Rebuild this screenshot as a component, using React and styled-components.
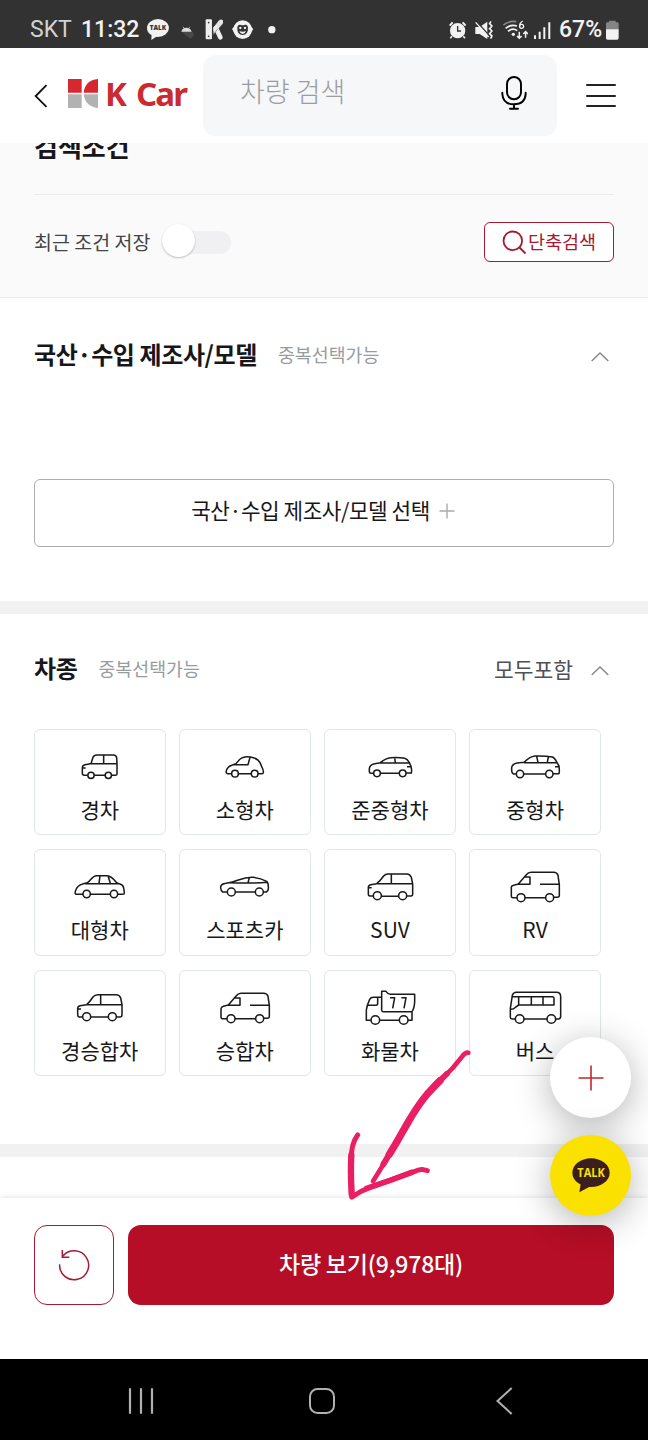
import styled, { createGlobalStyle } from "styled-components";

const carTypes = [
  {
    name: "경차",
    viewBox: "150 86 180 120",
    wheels: [[213, 165, 9.5], [265, 165, 9.5]],
    d: "M203 165H193Q187 165 187 159V142Q187 135 195 133L211 130H291M213 130L219 111Q222 104 230 104H280Q289 104 290 113L291 130V160Q291 165 286 165H275M255 165H223M251 104V130M188 143H197",
  },
  {
    name: "소형차",
    viewBox: "585 86 180 120",
    wheels: [[645, 160, 10], [704, 160, 10]],
    d: "M635 160H623Q617 159 619 151Q622 139 637 134L648 130Q656 117 667 112Q682 107 700 112Q719 117 725 139Q731 149 730 157Q729 160 724 160H714M655 160H694M638 133H684L690 111",
  },
  {
    name: "준중형차",
    viewBox: "134 86 180 120",
    wheels: [[185, 159, 10], [262, 159, 10]],
    d: "M175 159H167Q162 159 162 153V145Q163 133 178 130L195 127Q212 113 226 112Q250 110 268 114Q276 116 282 127L287 138Q290 150 288 158H272M195 159H252M195 128H282M238 112L240 127M275 139H288",
  },
  {
    name: "중형차",
    viewBox: "570 86 180 120",
    wheels: [[615, 161, 11], [703, 161, 11]],
    d: "M604 161H596Q590 159 590 150V141Q592 131 606 128L627 126Q644 109 660 107Q690 106 712 110Q719 112 725 125L732 137Q734 152 732 160H714M626 161H692M627 127H726M665 108L669 126M700 110L697 126M720 139H733",
  },
  {
    name: "대형차",
    viewBox: "150 448 180 120",
    wheels: [[200, 523, 11], [282, 523, 11]],
    d: "M189 524H169Q164 523 166 515Q170 497 190 492Q204 491 210 482Q221 468 230 468H262Q274 469 288 487Q291 491 300 493Q310 496 311 505L313 519Q313 524 309 524H293M211 524H271M195 492H297M240 468L237 491M264 468L271 491",
  },
  {
    name: "스포츠카",
    viewBox: "585 448 180 120",
    wheels: [[634, 517, 12], [718, 517, 12]],
    d: "M622 517H608Q603 514 602 505Q601 493 618 491Q638 488 655 481Q680 472 700 473Q722 475 740 485Q746 490 745 508Q744 514 739 517H730M646 517H706M628 489Q690 492 743 488M688 473L684 490",
  },
  {
    name: "SUV",
    viewBox: "134 448 180 120",
    wheels: [[186, 528, 12], [262, 528, 12]],
    d: "M174 529H164Q159 529 159 523V503Q159 497 166 495L184 492Q195 483 205 469Q210 463 218 463H275Q284 463 288 473L292 493V523Q292 529 287 529H274M198 530H250M184 492H292M228 463V492M159 504H169",
  },
  {
    name: "RV",
    viewBox: "570 448 180 120",
    wheels: [[618, 534, 12], [704, 534, 12]],
    d: "M606 534H594Q589 534 589 528V502Q590 498 596 497L610 493L634 465Q640 458 648 458H716Q726 458 729 467L733 495V527Q733 533 727 533H716M630 534H692M608 494H645V472H628M675 494H733",
  },
  {
    name: "경승합차",
    viewBox: "150 90 180 120",
    wheels: [[200, 170, 12], [277, 170, 12]],
    d: "M188 171H178Q173 170 173 164V146Q173 139 180 137L200 134Q210 125 219 111Q225 104 233 104H290Q299 105 302 114L306 134V164Q306 171 300 171H289M212 171H265M200 134H306M242 104V134M173 147H183",
  },
  {
    name: "승합차",
    viewBox: "584 89 180 120",
    wheels: [[632, 175, 12], [718, 175, 12]],
    d: "M620 175H607Q602 175 602 169V145Q603 140 609 138L624 134L648 106Q654 99 662 99H730Q740 99 743 108L747 135V168Q747 174 741 174H730M644 175H706M622 135H659V113H642M689 135H747",
  },
  {
    name: "화물차",
    viewBox: "134 90 180 120",
    wheels: [[180, 180, 13], [265, 180, 13]],
    d: "M167 181H153V150Q155 135 163 118Q166 112 174 112H198M155 136H182Q187 136 187 130V112M199 94H212Q218 103 225 103H298V125Q297 145 290 155H204Q199 155 199 150ZM224 113H238L232 145M258 113H272L266 145M193 181H252M278 181H290V156",
  },
  {
    name: "버스",
    viewBox: "570 90 180 120",
    wheels: [[614, 177, 13], [709, 177, 13]],
    d: "M601 177H591Q586 177 586 172V145L592 106Q595 97 604 97H724Q737 97 737 110V168Q737 177 730 177H722M627 177H696M592 110H712Q717 110 717 115V135H611M587 148Q597 148 601 142L611 135V110M649 110V135M684 110V135",
  },
];

const CarIcon = ({ car }) => (
  <svg width="60" height="40" viewBox={car.viewBox} fill="none" stroke="#1a1a1a" strokeWidth="4.6" strokeLinejoin="round">
    <path d={car.d} />
    {car.wheels.map(([cx, cy, r]) => (
      <circle key={cx} cx={cx} cy={cy} r={r} />
    ))}
  </svg>
);

const Chevron = () => (
  <ChevronIcon width="18" height="10" viewBox="0 0 18 10">
    <path d="M.7 9L9 1L17.3 9" />
  </ChevronIcon>
);

const StatusIcons = () => (
  <>
    <StatusIcon $left={9} width="22.3" height="21" viewBox="441 57 67 63">
      <ellipse cx="474" cy="84" rx="33" ry="27" fill="#f2f2f2" />
      <path d="M455 100L454 120L476 106Z" fill="#f2f2f2" />
      <text x="474" y="91.500" textAnchor="middle" fontFamily="Open Sans, sans-serif" fontWeight="800" fontSize="19" fill="#333">TALK</text>
    </StatusIcon>
    <StatusIcon $left={11.700} width="13.3" height="21" viewBox="543 57 40 63">
      <path d="M545 94H575L583 104L572 117Q556 108 545 94Z" fill="#484848" />
      <path d="M544 95Q547 83 559 83Q571 83 575 95Z" fill="#ddd" />
      <path d="M549 80L553 86M570 80L566 86" stroke="#ddd" strokeWidth="2" />
    </StatusIcon>
    <StatusIcon $left={10.700} width="18.3" height="21" viewBox="615 57 55 63">
      <rect x="617" y="58" width="19" height="60" rx="3" fill="#eee" />
      <circle cx="626" cy="68" r="2.500" fill="#333" />
      <circle cx="626" cy="109" r="2.500" fill="#333" />
      <path d="M639 84L656 62Q663 55 669 61Q672 67 667 73L641 102Z" fill="#e3e3e3" />
      <path d="M648 84L661 112" stroke="#eee" strokeWidth="14" strokeLinecap="round" fill="none" />
      <path d="M640 104L654 86" stroke="#777" strokeWidth="2" />
    </StatusIcon>
    <StatusIcon $left={8.700} width="21.3" height="21" viewBox="696 57 64 63">
      <circle cx="728" cy="89" r="28" fill="#f2f2f2" />
      <path d="M707 75L696 87L706 103ZM749 75L760 87L750 103Z" fill="#f2f2f2" />
      <path d="M712 83Q713 73 721 74Q728 77 735 74Q743 73 744 83Q745 104 728 105Q711 104 712 83Z" fill="#333" />
      <circle cx="721" cy="84" r="3.500" fill="#f2f2f2" />
      <circle cx="735" cy="84" r="3.500" fill="#f2f2f2" />
      <path d="M718 93Q728 98 738 93Q735 102 728 102Q721 102 718 93Z" fill="#f2f2f2" />
    </StatusIcon>
    <StatusIcon $left={14.700} width="7.7" height="21" viewBox="804 57 23 63">
      <circle cx="815.500" cy="89" r="11" fill="#f2f2f2" />
    </StatusIcon>
  </>
);

const SystemIcons = () => (
  <>
    <StatusIcon width="17.3" height="20" viewBox="375 58 52 60">
      <circle cx="401" cy="90" r="23" fill="#f2f2f2" />
      <path d="M377 75L386 65M425 75L416 65" stroke="#f2f2f2" strokeWidth="6" />
      <path d="M384 107L379 113M418 107L423 113" stroke="#f2f2f2" strokeWidth="5" />
      <path d="M401 76V91H411" stroke="#333" strokeWidth="4" fill="none" />
    </StatusIcon>
    <StatusIcon $left={9.400} width="17.6" height="20" viewBox="455 58 53 60">
      <path d="M456 79H469L492 63V115L469 100H456Z" fill="#f2f2f2" />
      <path d="M460 62L499 106" stroke="#333" strokeWidth="4" />
      <path d="M457 65L496 109" stroke="#f2f2f2" strokeWidth="4" />
      <path d="M503 62L499 69L506 76L499 84L506 91L499 99L506 106L502 114" stroke="#f2f2f2" strokeWidth="5" fill="none" />
    </StatusIcon>
    <StatusIcon $left={9.700} width="25.6" height="20" viewBox="537 58 77 60">
      <g fill="none" strokeWidth="5">
        <path d="M538 73Q556 59 577 63" stroke="#888" />
        <path d="M545 83Q561 70 579 76M552 92Q566 80 580 90" stroke="#f2f2f2" />
        <path d="M586 93V113M579 106L586 113L593 106M605 111V94M598 100L605 93L612 100" stroke="#f2f2f2" strokeWidth="4.500" />
        <path d="M596 61Q588 66 587 75" stroke="#f2f2f2" strokeWidth="4" />
        <circle cx="593" cy="77" r="6" stroke="#f2f2f2" strokeWidth="4" />
      </g>
      <circle cx="568" cy="101" r="5" fill="#f2f2f2" />
    </StatusIcon>
    <StatusIcon $left={5.400} width="17.3" height="20" viewBox="631 56 52 60">
      <path d="M634 102V113M648 91V113M662 78V113M677 63V113" stroke="#f2f2f2" strokeWidth="6" />
    </StatusIcon>
  </>
);

export default function App() {
  return (
    <Screen>
      <GlobalStyle />
      <StatusBar>
        <Carrier>SKT</Carrier>
        <Clock>11:32</Clock>
        <StatusIcons />
        <Spacer />
        <SystemIcons />
        <Percent>67%</Percent>
        <StatusIcon $left={3} width="13" height="20" viewBox="848 58 39 60">
          <path d="M857 60H877V65H882Q886 65 886 69V87H848V69Q848 65 852 65H857Z" fill="#858585" />
          <path d="M848 86H886V112Q886 117 881 117H853Q848 117 848 112Z" fill="#f2f2f2" />
        </StatusIcon>
      </StatusBar>

      <Header>
        <svg width="14" height="24" viewBox="0 0 14 24" fill="none" stroke="#111" strokeWidth="1.9">
          <path d="M12.500 1.200L1.700 12.100L12.500 22.900" />
        </svg>
        <Logo>
          <svg width="30" height="29" viewBox="204 236 90 87">
            <path d="M204 236H245V277H204ZM251 277Q255 240 294 236V277Z" fill="#d7282f" />
            <path d="M204 282H245V323H204ZM251 282H294V323Q255 319 251 282Z" fill="#b2b2b2" />
          </svg>
          <LogoText>K Car</LogoText>
        </Logo>
        <SearchBox>
          <SearchText>차량 검색</SearchText>
          <svg width="26" height="34" viewBox="530 230 78 102" fill="none" stroke="#000" strokeWidth="5.800" strokeLinecap="round">
            <rect x="548" y="233" width="42" height="67" rx="21" />
            <path d="M534 280V284Q536 315 569 315Q602 315 604 284V280M569 315V328M557 328.500H581" />
          </svg>
        </SearchBox>
        <MenuIcon>
          <i />
          <i />
          <i />
        </MenuIcon>
      </Header>

      <Content>
        <Conditions>
          <ConditionsTitle>검색조건</ConditionsTitle>
          <ConditionsRow>
            <SaveLabel>최근 조건 저장</SaveLabel>
            <Toggle>
              <Knob />
            </Toggle>
            <Spacer />
            <QuickSearch>
              <svg width="25" height="25" viewBox="0 0 25 25" fill="none" stroke="#a51a30" strokeWidth="1.8">
                <circle cx="10.800" cy="10.800" r="9.300" />
                <path d="M17.500 17.500L23.500 23.500" />
              </svg>
              <span>단축검색</span>
            </QuickSearch>
          </ConditionsRow>
        </Conditions>

        <Section $height={303} $top={38}>
          <SectionHead>
            <Title>국산·수입 제조사/모델</Title>
            <Hint>중복선택가능</Hint>
            <Spacer />
            <Chevron />
          </SectionHead>
          <ModelButton>
            국산·수입 제조사/모델 선택
            <svg width="16" height="16" viewBox="0 0 16 16" stroke="#aaaaae" strokeWidth="1.4">
              <path d="M8 .5V15.500M.5 8H15.500" />
            </svg>
          </ModelButton>
        </Section>
        <Divider />

        <Section $height={530} $top={36}>
          <SectionHead>
            <Title>차종</Title>
            <Hint>중복선택가능</Hint>
            <Spacer />
            <Included>모두포함</Included>
            <Chevron />
          </SectionHead>
          <CarGrid>
            {carTypes.map((car) => (
              <CarCard key={car.name}>
                <CarIcon car={car} />
                <CarName>{car.name}</CarName>
              </CarCard>
            ))}
          </CarGrid>
        </Section>
        <Divider />
      </Content>

      <BottomBar>
        <ResetButton>
          <svg width="32" height="32" viewBox="175 357 96 96" fill="none" stroke="#a51a30" strokeWidth="4.500">
            <path d="M180 403A43.500 43.500 0 1 0 190 378M188 360V382H209" />
          </svg>
        </ResetButton>
        <ViewButton>차량 보기(9,978대)</ViewButton>
      </BottomBar>

      <NavBar>
        <svg width="26" height="26" viewBox="0 0 26 26" stroke="#b0b0b0" strokeWidth="2.200">
          <path d="M2 .3V25.700M13 .3V25.700M24 .3V25.700" />
        </svg>
        <HomeIcon width="26" height="26" viewBox="0 0 26 26">
          <rect x="1" y="1" width="24" height="24" rx="7.500" />
        </HomeIcon>
        <svg width="17" height="28" viewBox="0 0 17 28" fill="none" stroke="#b0b0b0" strokeWidth="2">
          <path d="M15.700 1L1.500 14L15.700 27" />
        </svg>
      </NavBar>

      <Floating>
        <FloatButton>
          <svg width="26" height="26" viewBox="0 0 26 26" stroke="#c1272d" strokeWidth="1.600">
            <path d="M13 .5V25.500M.5 13H25.500" />
          </svg>
        </FloatButton>
        <FloatButton $talk>
          <svg width="38" height="36" viewBox="770 597 114 108">
            <ellipse cx="827" cy="641" rx="56" ry="43" fill="#3b1e1e" />
            <path d="M797 670L792 700L828 680Z" fill="#3b1e1e" />
            <text x="827" y="655" textAnchor="middle" fontFamily="Open Sans, sans-serif" fontWeight="700" fontSize="37" textLength="82" lengthAdjust="spacingAndGlyphs" fill="#fae100">TALK</text>
          </svg>
        </FloatButton>
      </Floating>

      <Arrow width="140" height="165" viewBox="0 0 420 495">
        <path d="M385 38Q376 36 366 50L340 82C310 112 288 134 262 162C228 202 212 234 192 268C166 314 140 358 125 382L99 424" strokeWidth="14" />
        <path d="M300 122C284 138 275 148 262 162C228 202 212 234 192 268C176 297 160 324 148 343" strokeWidth="22" />
        <path d="M320 102L290 132M155 331L130 373" strokeWidth="18" />
        <path d="M53 285C38 305 33 330 34 360L35 472C58 455 70 449 90 442L150 421L222 395Q240 386 250 389L262 392" strokeWidth="15" />
        <path d="M34 345Q31 390 35 462" strokeWidth="19" />
        <path d="M80 445L150 421L215 397" strokeWidth="17" />
      </Arrow>
    </Screen>
  );
}

const GlobalStyle = createGlobalStyle`
  * {
    box-sizing: border-box;
  }
  body {
    margin: 0;
    background: #fff;
    font-family: "Noto Sans CJK KR", "Noto Sans", sans-serif;
    color: #17171a;
  }
  svg {
    display: block;
    flex-shrink: 0;
  }
  button {
    font-family: inherit;
    padding: 0;
    margin: 0;
  }
`;

const Screen = styled.div`
  position: relative;
  display: flex;
  flex-direction: column;
  width: 648px;
  height: 1440px;
  overflow: hidden;
  background: #fff;
`;

const Spacer = styled.div`
  flex: 1;
`;

const StatusBar = styled.div`
  display: flex;
  align-items: center;
  height: 48px;
  padding: 11px 29px 0 30px;
  background: #323232;
  color: #f2f2f2;
  font-family: Roboto, sans-serif;
  font-size: 23px;
  line-height: 28px;
`;

const Carrier = styled.span`
  width: 51px;
  color: #d2d2d2;
`;

const Clock = styled.span`
  width: 57px;
  font-weight: 500;
`;

const Percent = styled.span`
  width: 44px;
  margin-left: 8px;
  font-weight: 500;
`;

const StatusIcon = styled.svg`
  margin-left: ${({ $left }) => $left || 0}px;
`;

const ChevronIcon = styled.svg`
  margin-top: 6px;
  fill: none;
  stroke: #85858b;
  stroke-width: 1.4;
`;

const HomeIcon = styled.svg`
  margin-right: 6px;
  fill: none;
  stroke: #b0b0b0;
  stroke-width: 2;
`;

const Header = styled.header`
  display: flex;
  align-items: center;
  height: 95px;
  padding: 0 32px 0 34px;
`;

const Logo = styled.div`
  display: flex;
  align-items: center;
  width: 135px;
  margin: -4px 0 0 20px;
`;

const LogoText = styled.span`
  margin-left: 7px;
  font-family: "Noto Sans", sans-serif;
  font-weight: 700;
  font-size: 33px;
  line-height: 34px;
  letter-spacing: -1.8px;
  word-spacing: 4px;
  white-space: nowrap;
  color: #cb2a31;
`;

const SearchBox = styled.div`
  display: flex;
  align-items: center;
  justify-content: space-between;
  width: 354px;
  height: 81px;
  padding: 0 30px 5px 37px;
  border-radius: 13px;
  background: #f6f7f9;
`;

const SearchText = styled.span`
  margin-top: -5px;
  font-weight: 300;
  font-size: 27px;
  line-height: 36px;
  color: #9b9ea1;
`;

const MenuIcon = styled.div`
  display: flex;
  flex-direction: column;
  justify-content: space-between;
  width: 30px;
  height: 23px;
  margin-left: auto;

  i {
    height: 2px;
    border-radius: 1px;
    background: #222;
  }
`;

const Content = styled.main`
  height: 1055px;
  overflow: hidden;
`;

const Conditions = styled.section`
  display: flow-root;
  height: 155px;
  padding: 0 34px;
  background: #fafafa;
  border-bottom: 1px solid #ebebed;
`;

/* scrolled partly under the header */
const ConditionsTitle = styled.h2`
  height: 67px;
  margin: -15px 0 0;
  font-size: 26px;
  font-weight: 700;
  line-height: 36px;
  border-bottom: 1px solid #ececec;
`;

const ConditionsRow = styled.div`
  display: flex;
  align-items: center;
  height: 94px;
`;

const SaveLabel = styled.span`
  width: 131px;
  font-size: 19.500px;
  line-height: 28px;
  color: #444;
`;

const Toggle = styled.div`
  display: flex;
  align-items: center;
  width: 66px;
  height: 23px;
  margin-top: 1px;
  border-radius: 12px;
  background: #f0f0f2;
`;

const Knob = styled.div`
  flex-shrink: 0;
  width: 33px;
  height: 33px;
  margin: -4px 0 0 -3px;
  border-radius: 50%;
  background: #fff;
  box-shadow: 0 1px 2px rgba(0, 0, 0, 0.25);
`;

const QuickSearch = styled.button`
  display: flex;
  align-items: center;
  justify-content: center;
  gap: 1px;
  width: 130px;
  height: 40px;
  border: 1.500px solid #a51a30;
  border-radius: 6px;
  background: #fff;
  font-size: 18.500px;
  color: #a51a30;

  span {
    margin-top: -3px;
  }
`;

const Section = styled.section`
  height: ${({ $height }) => $height}px;
  padding: ${({ $top }) => $top}px 34px 0;
`;

const SectionHead = styled.div`
  display: flex;
  align-items: center;
  height: 36px;
  padding-right: 5px;
`;

const Title = styled.h3`
  margin: 0;
  font-size: 24px;
  font-weight: 700;
  line-height: 36px;
  letter-spacing: -0.4px;
`;

const Hint = styled.span`
  margin-left: 21px;
  font-size: 18.400px;
  color: #999c9f;
`;

const Included = styled.span`
  margin-right: 18px;
  font-size: 21.500px;
  color: #505055;
`;

const ModelButton = styled.button`
  display: flex;
  align-items: center;
  justify-content: center;
  gap: 9px;
  width: 100%;
  height: 68px;
  margin-top: 107px;
  padding: 0 2px 8px 0;
  border: 1px solid #aeaeb0;
  border-radius: 6px;
  background: #fff;
  font-size: 21.300px;
  letter-spacing: -0.450px;
  color: #17171a;

  svg {
    margin-top: 4px;
  }
`;

const Divider = styled.div`
  height: 13px;
  background: #f1f1f1;
`;

const CarGrid = styled.div`
  display: grid;
  grid-template-columns: repeat(4, 131.500px);
  grid-auto-rows: 106.500px;
  gap: 14px 13.600px;
  margin-top: 42.500px;
`;

const CarCard = styled.div`
  display: flex;
  flex-direction: column;
  align-items: center;
  padding-top: 19px;
  border: 1px solid #e1e6e8;
  border-radius: 6px;
`;

const CarName = styled.span`
  margin-top: 5px;
  font-size: 21px;
  line-height: 30px;
`;

const BottomBar = styled.div`
  position: relative;
  display: flex;
  gap: 14px;
  height: 161px;
  padding: 27px 34px 0;
  background: #fff;
  box-shadow: 0 -1px 5px rgba(0, 0, 0, 0.1);
`;

const ResetButton = styled.button`
  display: flex;
  align-items: center;
  justify-content: center;
  width: 80px;
  height: 80px;
  border: 1.500px solid #a51a30;
  border-radius: 13px;
  background: #fff;
`;

const ViewButton = styled.button`
  flex: 1;
  height: 80px;
  padding-bottom: 4px;
  border: 0;
  border-radius: 13px;
  background: #b50e26;
  font-size: 23px;
  font-weight: 500;
  letter-spacing: -0.200px;
  color: #fff;
`;

const NavBar = styled.nav`
  position: relative;
  display: flex;
  align-items: center;
  justify-content: space-between;
  height: 81px;
  padding: 3px 135px 0 128px;
  background: #000;
`;

/* stays above the list and the bottom bar */
const Floating = styled.div`
  position: absolute;
  top: 1037px;
  right: 17px;
  display: flex;
  flex-direction: column;
  gap: 17px;
`;

const FloatButton = styled.button`
  display: flex;
  align-items: center;
  justify-content: center;
  width: 81px;
  height: 81px;
  border: 0;
  border-radius: 50%;
  background: ${({ $talk }) => ($talk ? "#fae100" : "#fff")};
  box-shadow: 0 7px 36px rgba(0, 0, 0, 0.3);
`;

const Arrow = styled.svg`
  position: absolute;
  left: 340px;
  top: 1040px;
  fill: none;
  stroke: #e91e63;
  stroke-linecap: round;
  stroke-linejoin: round;
  pointer-events: none;
`;
